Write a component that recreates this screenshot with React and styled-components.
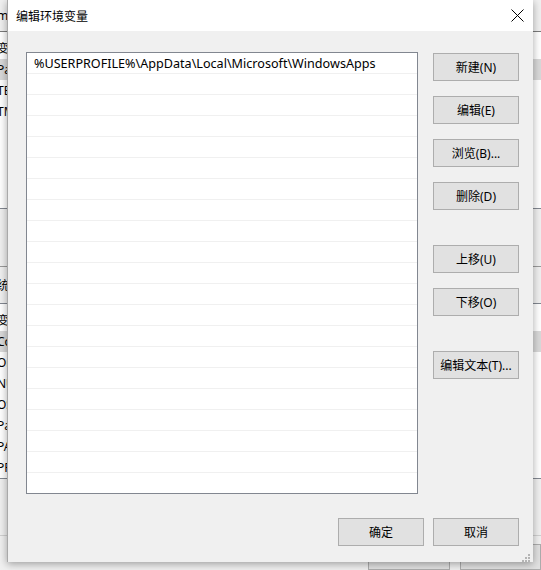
import styled, { createGlobalStyle } from 'styled-components'

const GlobalStyle = createGlobalStyle`
    html, body {
        margin: 0;
        padding: 0;
        width: 541px;
        height: 570px;
        overflow: hidden;
        background: #f0f0f0;
        font-family: "Noto Sans", "Noto Sans CJK SC", sans-serif;
        font-size: 12px;
        color: #000;
    }
`;

// ---- window in the back (only its edges show) ----
const Backdrop = styled.div`
    position: relative;
    width: 541px;
    height: 570px;
    overflow: hidden;
    background: #f0f0f0;
    display: flex;
    flex-direction: column;
`;

const BackCaption = styled.div`
    height: 33px;
    display: flex;
    align-items: center;
    text-indent: -3px;
    white-space: nowrap;
    border-bottom: 1px solid #7a7a7a;
`;

const BackList = styled.div`
    height: ${p => p.$h}px;
    background: #fff;
    display: flex;
    flex-direction: column;
    padding-top: 6px;
    border-bottom: 1px solid #828790;
`;

const BackRow = styled.div`
    height: 21px;
    line-height: 21px;
    white-space: nowrap;
    text-indent: -3px;
    background: ${p => (p.$selected ? '#d9d9d9' : 'transparent')};
`;

const BackGap = styled.div`
    height: ${p => p.$h}px;
    border-bottom: 1px solid ${p => p.$line || 'transparent'};
    display: flex;
    align-items: center;
    white-space: nowrap;
    text-indent: -3px;
`;

const BackFooter = styled.div`
    flex: 1;
    display: flex;
    gap: 10px;
    padding: 8px 0 0 368px;
`;

const BackButton = styled.div`
    width: 85px;
    height: 24px;
    background: #e1e1e1;
    border: 1px solid #adadad;
`;

// ---- the dialog ----
const Dialog = styled.div`
    position: absolute;
    top: 0;
    left: 7px;
    width: 526px;
    height: 562px;
    box-sizing: border-box;
    background: #f0f0f0;
    border-left: 1px solid #a9a9a9;
    box-shadow: 0 2px 8px rgba(0, 0, 0, 0.35);
    display: flex;
    flex-direction: column;
`;

const TitleBar = styled.div`
    height: 31px;
    flex: none;
    background: #fff;
    display: flex;
    align-items: center;
    justify-content: space-between;
    padding: 0 9px 0 8px;
`;

const Title = styled.span`
    font-family: "Noto Sans CJK SC", sans-serif;
    font-size: 12px;
    padding-bottom: 1px;
`;

const Close = styled.div`
    width: 14px;
    height: 14px;
    display: flex;
    align-items: center;
    justify-content: center;
`;

const Body = styled.div`
    flex: 1;
    display: flex;
    flex-direction: column;
    padding: 21px 14px 0 18px;
`;

const Main = styled.div`
    display: flex;
    gap: 15px;
`;

const ListBox = styled.div`
    width: 392px;
    height: 442px;
    box-sizing: border-box;
    border: 1px solid #828790;
    background: #fff;
    overflow: hidden;
    display: flex;
    flex-direction: column;
`;

const ListRow = styled.div`
    height: 21px;
    flex: none;
    box-sizing: border-box;
    border-bottom: 1px solid #f0f0f0;
    padding: 2px 0 0 7px;
    line-height: 18px;
    white-space: nowrap;
    overflow: hidden;
    font-size: 12.6px;
`;

const Buttons = styled.div`
    display: flex;
    flex-direction: column;
    gap: 15px;
    padding-top: 1px;
`;

const Button = styled.button`
    width: 86px;
    height: 28px;
    margin-top: ${p => p.$space || 0}px;
    padding: 0;
    box-sizing: border-box;
    background: #e1e1e1;
    border: 1px solid #adadad;
    font-family: "Noto Sans", "Noto Sans CJK SC", sans-serif;
    font-size: 12px;
    color: #000;
`;

const Footer = styled.div`
    display: flex;
    justify-content: flex-end;
    gap: 9px;
    margin-top: 24px;
`;

const Grip = styled.div`
    position: absolute;
    right: 2px;
    bottom: 2px;
    width: 10px;
    height: 10px;
`;

const listItems = ['%USERPROFILE%\\AppData\\Local\\Microsoft\\WindowsApps']

const App = () => {
    const rows = Array.from({ length: 21 }, (_, i) => listItems[i] || '')

    return (
        <>
            <GlobalStyle />
            <Backdrop>
                <BackCaption>m</BackCaption>
                <BackList $h={178}>
                    <BackRow>变</BackRow>
                    <BackRow $selected>Pa</BackRow>
                    <BackRow>TE</BackRow>
                    <BackRow>TM</BackRow>
                </BackList>
                <BackGap $h={60} $line="#9a9a9a" />
                <BackGap $h={37} $line="#828790">统</BackGap>
                <BackList $h={176}>
                    <BackRow>变</BackRow>
                    <BackRow $selected>Co</BackRow>
                    <BackRow>Or</BackRow>
                    <BackRow>NU</BackRow>
                    <BackRow>OS</BackRow>
                    <BackRow>Pa</BackRow>
                    <BackRow>PA</BackRow>
                    <BackRow>PR</BackRow>
                </BackList>
                <BackGap $h={59} $line="#d0d0d0" />
                <BackFooter>
                    <BackButton />
                    <BackButton />
                </BackFooter>

                <Dialog>
                    <TitleBar>
                        <Title>编辑环境变量</Title>
                        <Close>
                            <svg width="13" height="13" viewBox="0 0 13 13">
                                <path d="M0.5 0.5 L12.5 12.5 M12.5 0.5 L0.5 12.5" stroke="#000" strokeWidth="1" fill="none" />
                            </svg>
                        </Close>
                    </TitleBar>
                    <Body>
                        <Main>
                            <ListBox>
                                {rows.map((r, i) => (
                                    <ListRow key={i}>{r}</ListRow>
                                ))}
                            </ListBox>
                            <Buttons>
                                <Button>新建(N)</Button>
                                <Button>编辑(E)</Button>
                                <Button>浏览(B)...</Button>
                                <Button>删除(D)</Button>
                                <Button $space={20}>上移(U)</Button>
                                <Button>下移(O)</Button>
                                <Button $space={20}>编辑文本(T)...</Button>
                            </Buttons>
                        </Main>
                        <Footer>
                            <Button>确定</Button>
                            <Button>取消</Button>
                        </Footer>
                    </Body>
                    <Grip>
                        <svg width="10" height="10" viewBox="0 0 10 10" fill="#b4b4b4">
                            <rect x="7" y="1" width="2" height="2" />
                            <rect x="4" y="4" width="2" height="2" />
                            <rect x="7" y="4" width="2" height="2" />
                            <rect x="1" y="7" width="2" height="2" />
                            <rect x="4" y="7" width="2" height="2" />
                            <rect x="7" y="7" width="2" height="2" />
                        </svg>
                    </Grip>
                </Dialog>
            </Backdrop>
        </>
    )
}

export default App
